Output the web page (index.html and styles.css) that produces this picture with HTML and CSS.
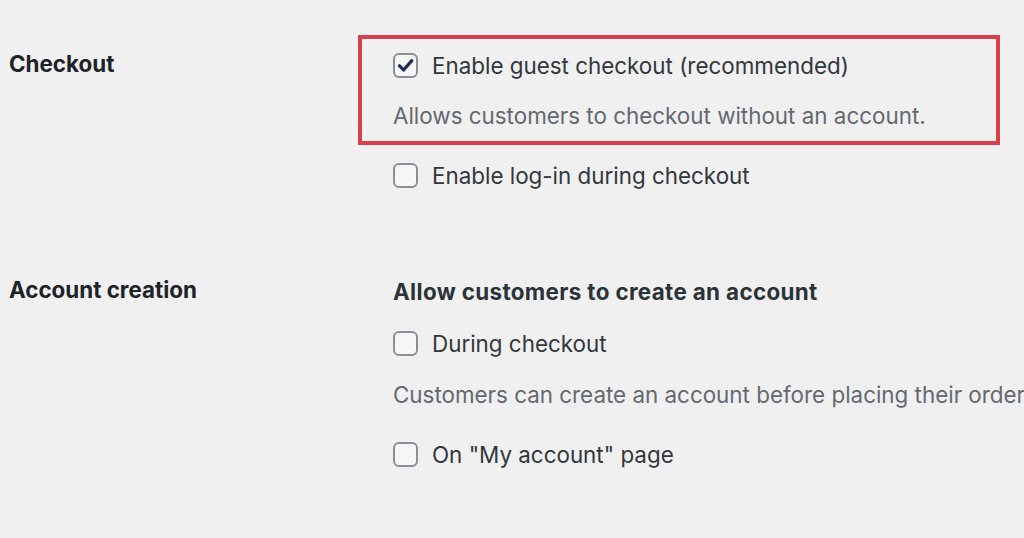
FILE: index.html
```html
<!DOCTYPE html>
<html lang="en">
<head>
<meta charset="utf-8">
<title>Accounts &amp; Privacy</title>
<link rel="stylesheet" href="styles.css">
</head>
<body>
<div class="settings">
  <div class="row row-checkout">
    <div class="th th-checkout">Checkout</div>
    <div class="td">
      <div class="highlight">
        <label class="option">
          <span class="box checked">
            <svg viewBox="0 0 25 25" width="25" height="25"><path d="M6.5 12.8 L10.6 17 L18.8 7.6" fill="none" stroke="#1e2b55" stroke-width="3.2" stroke-linecap="round" stroke-linejoin="round"/></svg>
          </span>
          <span class="text">Enable guest checkout (recommended)</span>
        </label>
        <p class="desc">Allows customers to checkout without an account.</p>
      </div>
      <label class="option option-after">
        <span class="box"></span>
        <span class="text">Enable log-in during checkout</span>
      </label>
    </div>
  </div>
  <div class="row row-account">
    <div class="th th-account">Account creation</div>
    <div class="td">
      <div class="legend">Allow customers to create an account</div>
      <label class="option">
        <span class="box"></span>
        <span class="text">During checkout</span>
      </label>
      <p class="desc desc-spaced">Customers can create an account before placing their order.</p>
      <label class="option">
        <span class="box"></span>
        <span class="text">On "My account" page</span>
      </label>
    </div>
  </div>
</div>
</body>
</html>
```

FILE: styles.css
```css
html, body {
  margin: 0;
  padding: 0;
  background: #f0f0f1;
  overflow: hidden;
}
body {
  width: 1024px;
  height: 538px;
  font-family: Inter, "Noto Sans", sans-serif;
  font-size: 22.4px;
  color: #32373c;
}
.settings {
  padding-left: 9px;
}
.row {
  display: grid;
  grid-template-columns: 384px 1fr;
}
.row-checkout {
  padding-top: 35px;
}
.row-account {
  padding-top: 66px;
}
.th {
  font-weight: 700;
  color: #1d2327;
  line-height: 30px;
}
.th-checkout {
  padding-top: 14px;
}
.th-account {
  padding-top: 8px;
}
.td {
  min-width: 0;
  white-space: nowrap;
}
.highlight {
  margin-left: -35px;
  width: 642px;
  height: 110px;
  box-sizing: border-box;
  border: 4px solid #d9404c;
  padding: 1.5px 0 0 31px;
}
.option {
  display: flex;
  align-items: center;
  gap: 14px;
  height: 50px;
}
.option-after {
  margin-top: 5.5px;
}
.box {
  width: 25px;
  height: 25px;
  box-sizing: border-box;
  border: 2px solid #8c8f94;
  border-radius: 6px;
  background: #f6f6f7;
  display: flex;
  flex: none;
  position: relative;
}
.box svg {
  position: absolute;
  left: -2px;
  top: -2px;
}
.text {
  line-height: 30px;
}
.desc {
  margin: 0;
  height: 50px;
  line-height: 50px;
  color: #646970;
}
.desc-spaced {
  margin-top: 1px;
  margin-bottom: 10px;
}
.legend {
  font-weight: 700;
  height: 50px;
  line-height: 50px;
  color: #2c3338;
  letter-spacing: 0.35px;
  margin-bottom: 2px;
}
```
